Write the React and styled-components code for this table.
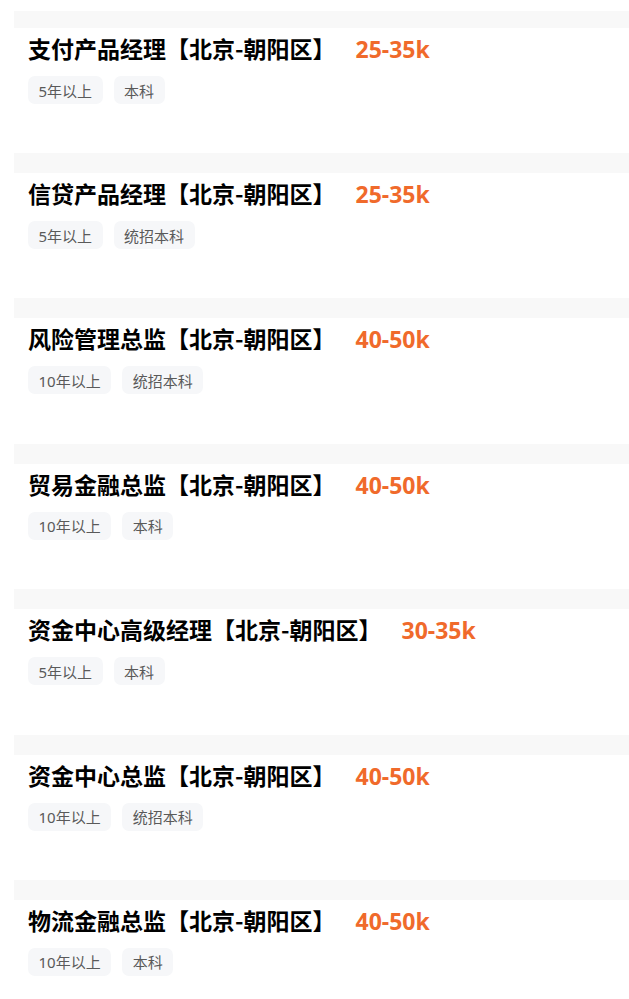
import React from 'react';
import styled, { createGlobalStyle } from 'styled-components';

const GlobalStyle = createGlobalStyle`
  html, body {
    margin: 0;
    padding: 0;
    background: #ffffff;
  }
  body {
    font-family: "Noto Sans CJK SC", "Noto Sans", sans-serif;
  }
`;

const jobs = [
  { title: '支付产品经理【北京-朝阳区】', salary: '25-35k', tags: ['5年以上', '本科'] },
  { title: '信贷产品经理【北京-朝阳区】', salary: '25-35k', tags: ['5年以上', '统招本科'] },
  { title: '风险管理总监【北京-朝阳区】', salary: '40-50k', tags: ['10年以上', '统招本科'] },
  { title: '贸易金融总监【北京-朝阳区】', salary: '40-50k', tags: ['10年以上', '本科'] },
  { title: '资金中心高级经理【北京-朝阳区】', salary: '30-35k', tags: ['5年以上', '本科'] },
  { title: '资金中心总监【北京-朝阳区】', salary: '40-50k', tags: ['10年以上', '统招本科'] },
  { title: '物流金融总监【北京-朝阳区】', salary: '40-50k', tags: ['10年以上', '本科'] },
];

const List = styled.div`
  padding: 11px 0 0 14px;
`;

const Card = styled.div`
  height: ${(p) => (p.$first ? '142px' : '145.4px')};
  display: flex;
  flex-direction: column;
`;

const Strip = styled.div`
  height: ${(p) => (p.$first ? '17px' : '20px')};
  background: #f8f8f8;
  flex-shrink: 0;
`;

const Body = styled.div`
  padding: 3px 14px 0 14px;
`;

const TitleRow = styled.div`
  display: flex;
  align-items: baseline;
  height: 34px;
  line-height: 34px;
`;

const Title = styled.span`
  font-family: "Noto Sans CJK SC", sans-serif;
  font-weight: 700;
  font-size: 23px;
  color: #000;
`;

const Salary = styled.span`
  margin-left: 20px;
  font-family: "Noto Sans", "Open Sans", sans-serif;
  font-weight: 700;
  font-size: 23px;
  color: #f06a2b;
`;

const Tags = styled.div`
  display: flex;
  gap: 11px;
  margin-top: 11px;
`;

const Tag = styled.span`
  display: inline-flex;
  align-items: center;
  height: 28px;
  padding: 0 10.5px;
  border-radius: 7px;
  background: #f6f7f9;
  color: #5a5a5a;
  font-size: 15px;
  font-family: "Noto Sans", "Noto Sans CJK SC", sans-serif;
`;

export default function App() {
  return (
    <>
      <GlobalStyle />
      <List>
        {jobs.map((job, i) => (
          <Card key={i} $first={i === 0}>
            <Strip $first={i === 0} />
            <Body>
              <TitleRow>
                <Title>{job.title}</Title>
                <Salary>{job.salary}</Salary>
              </TitleRow>
              <Tags>
                {job.tags.map((t) => (
                  <Tag key={t}>{t}</Tag>
                ))}
              </Tags>
            </Body>
          </Card>
        ))}
      </List>
    </>
  );
}
